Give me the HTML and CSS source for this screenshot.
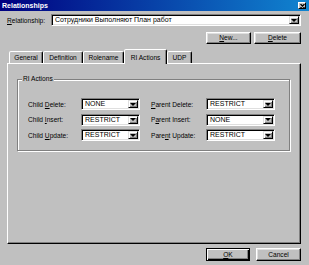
FILE: index.html
```html
<!DOCTYPE html>
<html lang="en">
<head>
    <meta charset="UTF-8">
    <meta name="viewport" content="width=device-width, initial-scale=1.0">
    <title>Relationships</title>
    <link rel="stylesheet" href="styles.css">
</head>
<body>
    <div class="window">
        <div class="titlebar">
            <span class="title">Relationships</span>
            <span class="close">
                <svg width="5" height="4" viewBox="0 0 5 4"><path d="M0.5 0 L4.5 4 M4.5 0 L0.5 4" stroke="#000" stroke-width="1.2"/></svg>
            </span>
        </div>

        <div class="content">
            <div class="rel-row">
                <label class="rel-label"><u>R</u>elationship:</label>
                <div class="combo rel-combo">
                    <span class="combo-text">Сотрудники Выполняют План работ</span>
                    <span class="drop"></span>
                </div>
            </div>

            <div class="btn-row">
                <button class="btn btn-new"><u>N</u>ew...</button>
                <button class="btn btn-delete"><u>D</u>elete</button>
            </div>

            <!-- tabs -->
            <div class="tab-strip">
                <div class="tab tab-general">General</div>
                <div class="tab tab-definition">Definition</div>
                <div class="tab tab-rolename">Rolename</div>
                <div class="tab tab-ri active">RI Actions</div>
                <div class="tab tab-udp">UDP</div>
            </div>

            <div class="panel">
                <div class="group">
                    <span class="legend">RI Actions</span>
                    <div class="ri-grid">
                        <label class="ri-label">Child <u>D</u>elete:</label>
                        <div class="combo combo-left"><span class="combo-text">NONE</span><span class="drop"></span></div>
                        <label class="ri-label right"><u>P</u>arent Delete:</label>
                        <div class="combo combo-right"><span class="combo-text">RESTRICT</span><span class="drop"></span></div>

                        <label class="ri-label">Child <u>I</u>nsert:</label>
                        <div class="combo combo-left"><span class="combo-text">RESTRICT</span><span class="drop"></span></div>
                        <label class="ri-label right">P<u>a</u>rent Insert:</label>
                        <div class="combo combo-right"><span class="combo-text">NONE</span><span class="drop"></span></div>

                        <label class="ri-label">Child <u>U</u>pdate:</label>
                        <div class="combo combo-left"><span class="combo-text">RESTRICT</span><span class="drop"></span></div>
                        <label class="ri-label right">Pare<u>n</u>t Update:</label>
                        <div class="combo combo-right"><span class="combo-text">RESTRICT</span><span class="drop"></span></div>
                    </div>
                </div>
            </div>

            <div class="footer">
                <button class="btn btn-ok"><u>O</u>K</button>
                <button class="btn btn-cancel">Cancel</button>
            </div>
        </div>
    </div>
</body>
</html>
```

FILE: styles.css
```css
* {
    box-sizing: border-box;
}
body {
    margin: 0;
    font-family: "Liberation Sans", Arial, sans-serif;
    font-size: 6.6px;
    color: #000;
    background: #c0c0c0;
}
.window {
    width: 309px;
    height: 265px;
    background: #c0c0c0;
    display: flex;
    flex-direction: column;
    overflow: hidden;
}
.titlebar {
    height: 11px;
    display: flex;
    align-items: center;
    justify-content: space-between;
    padding: 0 3px 0 2px;
    background: linear-gradient(to right, #000080, #1084d0);
    color: #fff;
    font-weight: bold;
    font-size: 7px;
}
.close {
    width: 8px;
    height: 7px;
    background: #c0c0c0;
    border: 1px solid;
    border-color: #fff #000 #000 #fff;
    display: flex;
    align-items: center;
    justify-content: center;
}
.close svg {
    display: block;
}
.content {
    flex: 1;
    display: flex;
    flex-direction: column;
    padding: 3px 8px 4px 7px;
}
.rel-row {
    display: flex;
    align-items: center;
    height: 12px;
}
.rel-label {
    width: 44px;
}
.rel-combo {
    flex: 1;
}
.combo {
    height: 12px;
    display: flex;
    background: #fff;
    border: 1px solid;
    border-color: #808080 #fff #fff #808080;
    box-shadow: inset 1px 1px #000, inset -1px -1px #dfdfdf;
    padding: 1px;
}
.combo-text {
    flex: 1;
    padding-left: 2px;
    font-size: 7px;
    line-height: 8px;
    white-space: nowrap;
    overflow: hidden;
}
.drop {
    width: 10px;
    background: #c0c0c0;
    border: 1px solid;
    border-color: #dfdfdf #000 #000 #dfdfdf;
    box-shadow: inset 1px 1px #fff, inset -1px -1px #808080;
    display: flex;
    align-items: center;
    justify-content: center;
}
.drop::after {
    content: "";
    border-left: 3px solid transparent;
    border-right: 3px solid transparent;
    border-top: 3px solid #000;
}
.btn-row {
    display: flex;
    justify-content: flex-end;
    gap: 3px;
    margin-top: 6px;
}
.btn {
    height: 12px;
    padding: 0;
    font-family: inherit;
    font-size: 6.6px;
    line-height: 10px;
    color: #000;
    background: #c0c0c0;
    border: 1px solid;
    border-color: #fff #000 #000 #fff;
    box-shadow: inset -1px -1px #808080, inset 1px 1px #dfdfdf;
}
.btn-new {
    width: 45px;
}
.btn-delete {
    width: 47px;
}
.tab-strip {
    display: flex;
    align-items: flex-end;
    height: 14px;
    margin-top: 5px;
    padding-left: 2px;
}
.tab {
    height: 12px;
    display: flex;
    align-items: center;
    justify-content: center;
    background: #c0c0c0;
    border: 1px solid;
    border-bottom: none;
    border-color: #fff #000 transparent #fff;
    box-shadow: inset -1px 0 #808080;
    border-radius: 2px 2px 0 0;
}
.tab.active {
    height: 15px;
    margin-bottom: -1px;
    position: relative;
    z-index: 1;
}
.tab-general { width: 34px; }
.tab-definition { width: 40px; }
.tab-rolename { width: 41px; }
.tab-ri { width: 43px; }
.tab-udp { width: 25px; }
.panel {
    height: 181px;
    border: 1px solid;
    border-color: #fff #000 #000 #fff;
    box-shadow: inset -1px -1px #808080;
    padding: 15px 10px 0 9px;
}
.group {
    border: 1px solid #808080;
    box-shadow: 1px 1px 0 #fff, inset 1px 1px 0 #fff;
    padding: 0 0 9px 10px;
}
.legend {
    display: table;
    margin: -5px 0 0 -6px;
    padding: 0 1px;
    line-height: 8px;
    background: #c0c0c0;
}
.ri-grid {
    display: grid;
    grid-template-columns: 53px 59px 66px 69px;
    grid-auto-rows: 12px;
    row-gap: 3.5px;
    align-items: center;
    margin-top: 15px;
}
.ri-label.right {
    padding-left: 11px;
}
.footer {
    display: flex;
    justify-content: flex-end;
    gap: 6px;
    margin-top: 4px;
}
.footer .btn {
    height: 13px;
}
.btn-ok {
    width: 44px;
    border-color: #000;
    box-shadow: inset 1px 1px #fff, inset -1px -1px #000, inset -2px -2px #808080;
}
.btn-cancel {
    width: 45px;
}
```
